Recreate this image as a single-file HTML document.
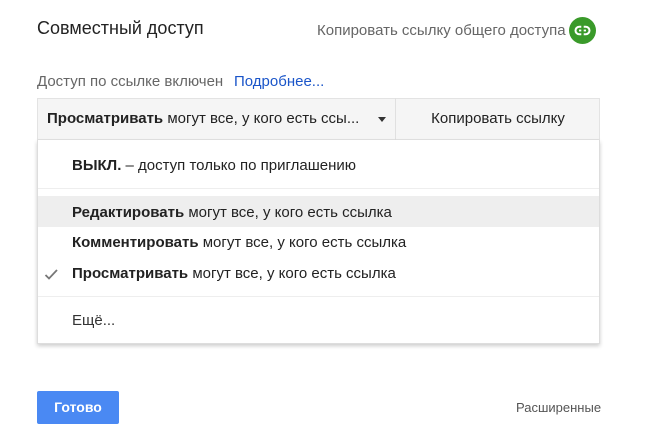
<!DOCTYPE html>
<html><head><meta charset="utf-8"><style>
*{margin:0;padding:0;box-sizing:border-box}
body{width:646px;height:442px;background:#fff;font-family:"Liberation Sans",Arial,sans-serif;position:relative;overflow:hidden;color:#222}
.a{position:absolute;white-space:nowrap}
b{font-weight:bold}
</style></head><body>
<div class="a" style="left:37px;top:18px;font-size:18px;color:#222">Совместный доступ</div>
<div class="a" style="left:317px;top:22px;font-size:15px;color:#666">Копировать ссылку общего доступа</div>
<svg class="a" style="left:569px;top:17px" width="27" height="27" viewBox="0 0 27 27"><circle cx="13.5" cy="13.5" r="13.5" fill="#3a9a2a"/><rect x="6.5" y="9.8" width="14" height="7.4" rx="3.7" fill="none" stroke="#fff" stroke-width="2"/><rect x="10" y="12.6" width="7" height="1.8" fill="#fff"/><rect x="12.3" y="8.5" width="2.4" height="10" fill="#3a9a2a"/></svg>
<div class="a" style="left:37px;top:73px;font-size:15px;color:#666">Доступ по ссылке включен</div>
<div class="a" style="left:234px;top:73px;font-size:15px;color:#1a55c9">Подробнее...</div>
<div class="a" style="left:37px;top:98px;width:563px;height:42px;background:#f5f5f5;border:1px solid #e3e3e3"></div>
<div class="a" style="left:395px;top:98px;width:1px;height:42px;background:#e0e0e0"></div>
<div class="a" style="left:47px;top:110px;font-size:15px;color:#222"><b>Просматривать</b> могут все, у кого есть ссы...</div>
<div class="a" style="left:378px;top:117px;width:0;height:0;border-left:4px solid transparent;border-right:4px solid transparent;border-top:5px solid #333"></div>
<div class="a" style="left:396px;top:110px;width:204px;text-align:center;font-size:15px;color:#222">Копировать ссылку</div>
<div class="a" style="left:37px;top:140px;width:563px;height:204px;background:#fff;border:1px solid #ddd;border-top:none;box-shadow:0 2px 4px rgba(0,0,0,.2)"></div>
<div class="a" style="left:38px;top:188px;width:561px;height:1px;background:#eee"></div>
<div class="a" style="left:38px;top:196px;width:561px;height:31px;background:#eeeeee"></div>
<div class="a" style="left:38px;top:296px;width:561px;height:1px;background:#eee"></div>
<div class="a" style="left:72px;top:157px;font-size:15px"><b>ВЫКЛ.</b> – доступ только по приглашению</div>
<div class="a" style="left:72px;top:204px;font-size:15px"><b>Редактировать</b> могут все, у кого есть ссылка</div>
<div class="a" style="left:72px;top:234px;font-size:15px"><b>Комментировать</b> могут все, у кого есть ссылка</div>
<svg class="a" style="left:44px;top:267px" width="15" height="15" viewBox="0 0 15 15"><path d="M1.5 8 L5 11.5 L13 3" fill="none" stroke="#777" stroke-width="1.8"/></svg>
<div class="a" style="left:72px;top:265px;font-size:15px"><b>Просматривать</b> могут все, у кого есть ссылка</div>
<div class="a" style="left:72px;top:312px;font-size:15px;color:#333">Ещё...</div>
<div class="a" style="left:37px;top:391px;width:82px;height:33px;background:#4a89f3;border-radius:2px;color:#fff;font-size:14px;font-weight:bold;text-align:center;line-height:33px">Готово</div>
<div class="a" style="left:516px;top:400px;font-size:13px;color:#555">Расширенные</div>
</body></html>
